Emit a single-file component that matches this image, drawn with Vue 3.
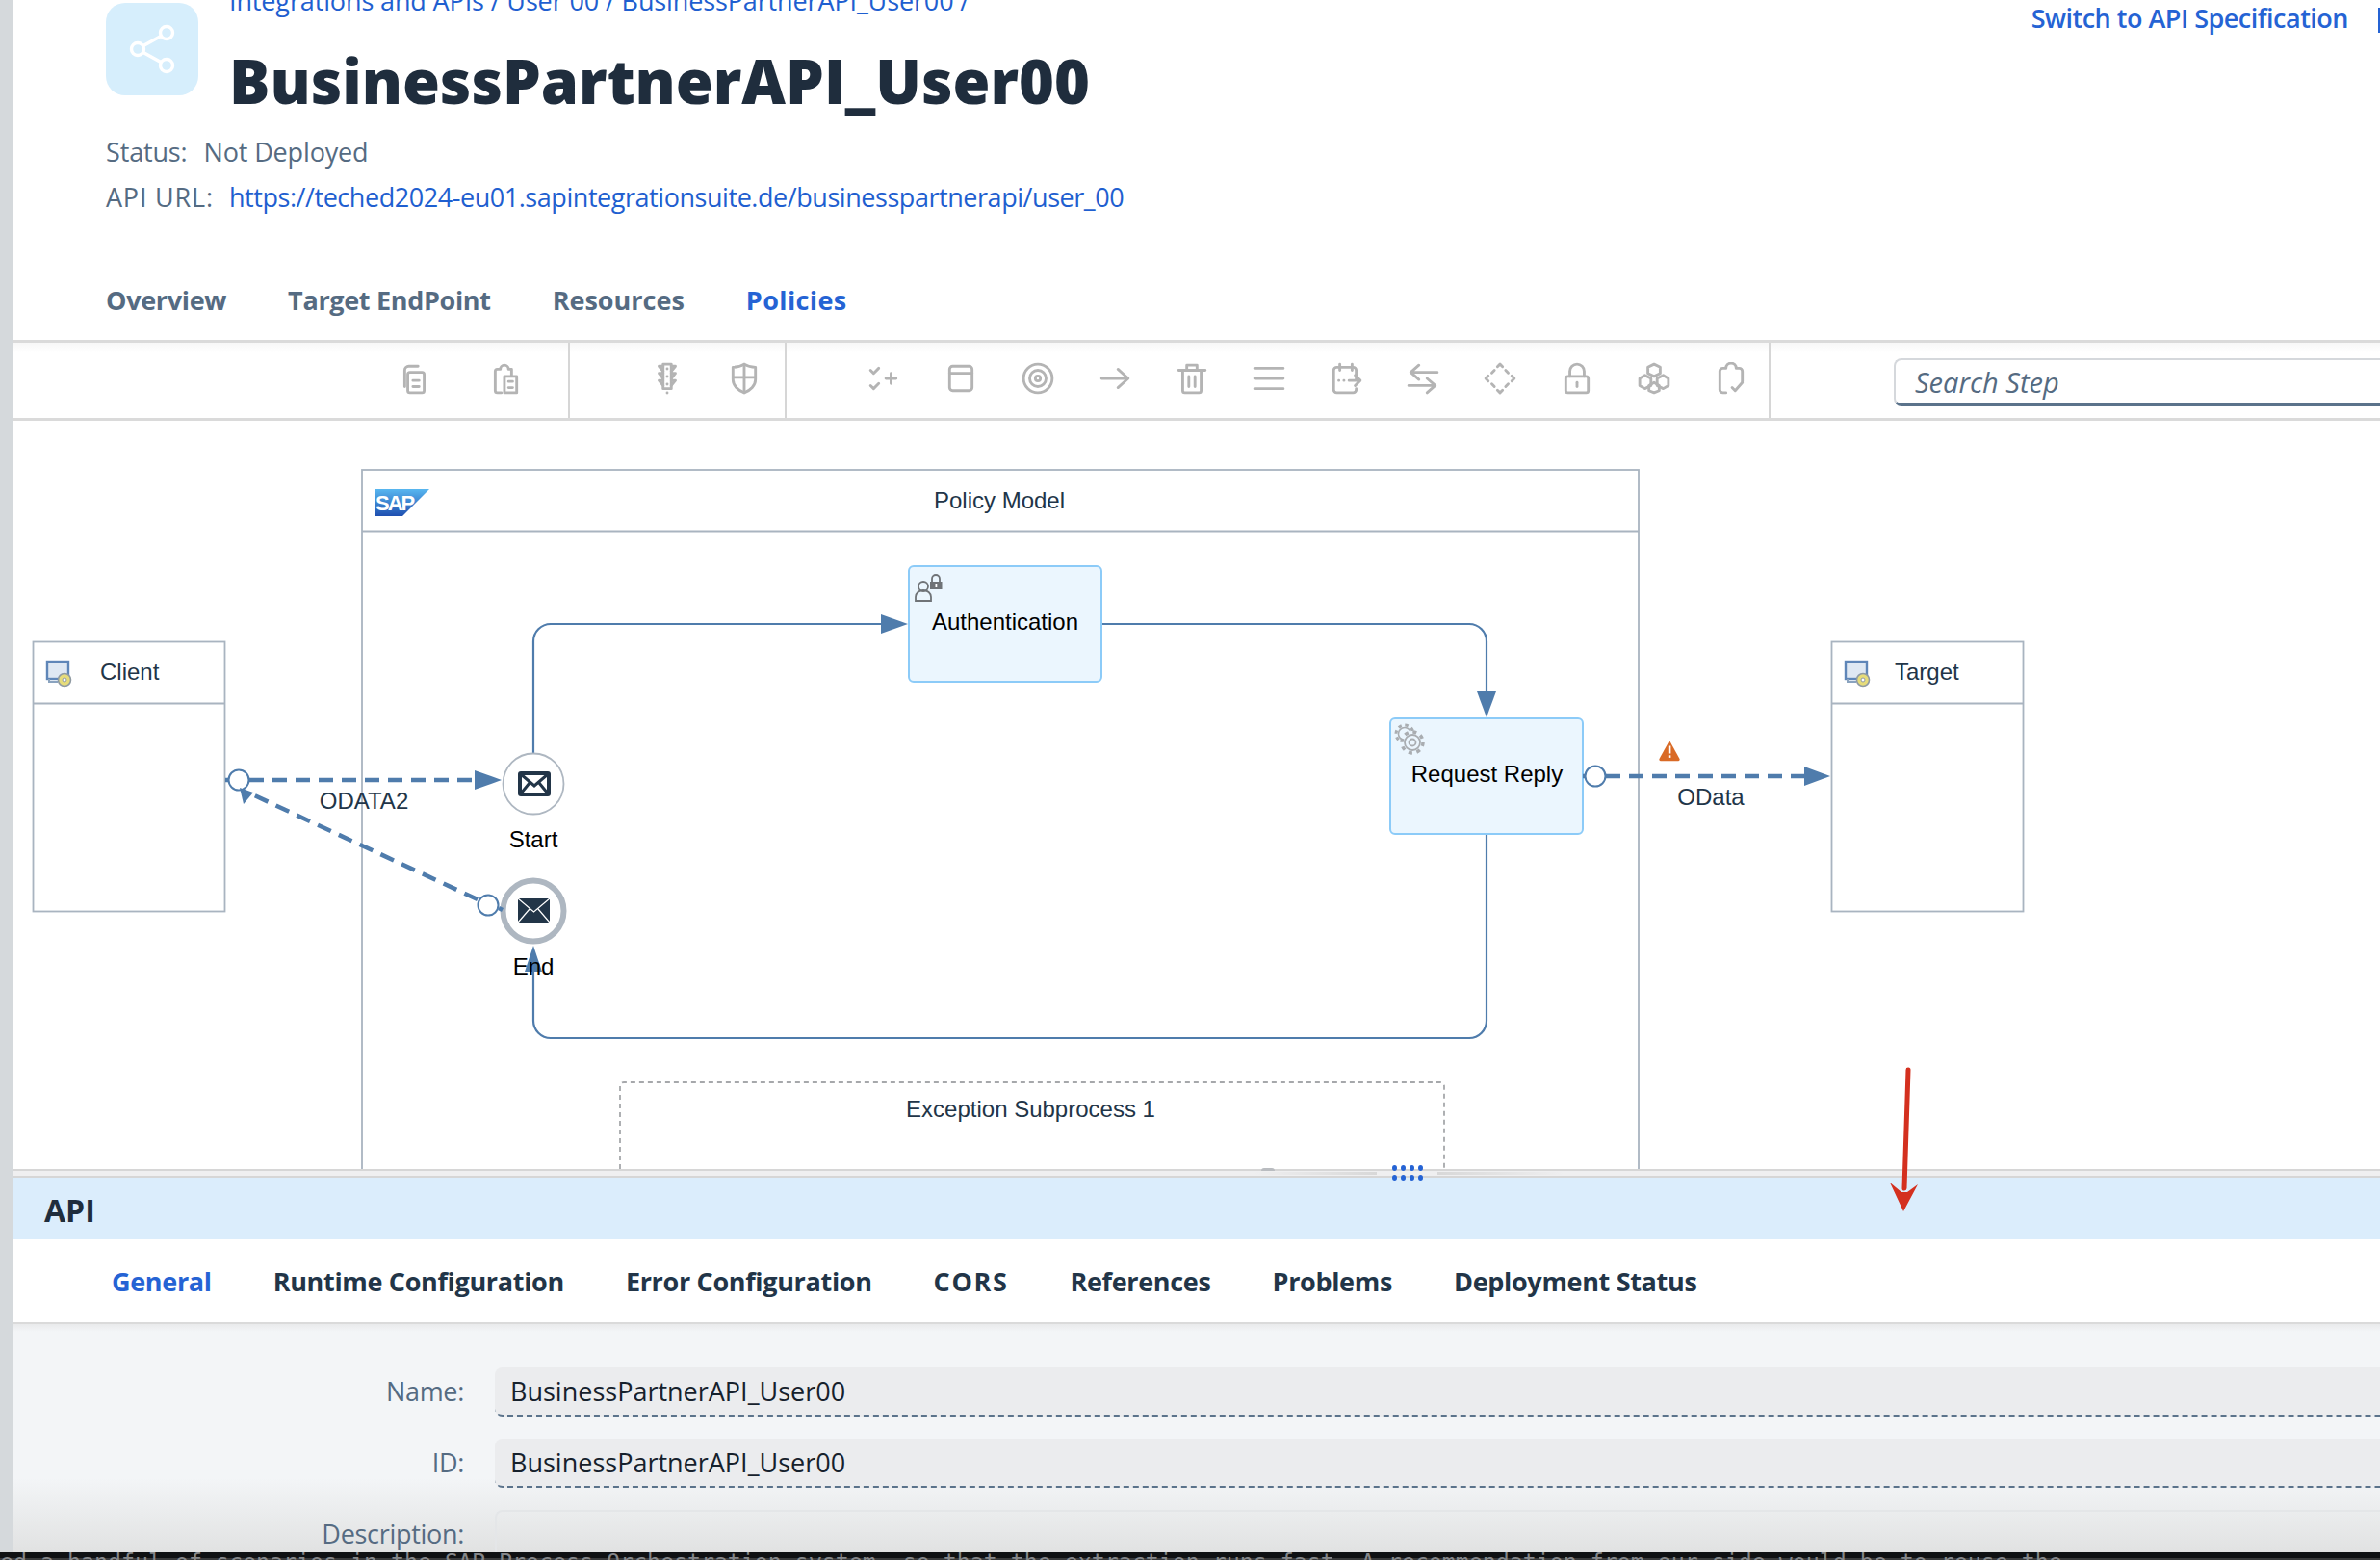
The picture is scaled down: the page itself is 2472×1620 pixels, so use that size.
<template>
  <div class="page">
    <div class="edge"></div>
    <main class="main">
      <header class="head">
        <div class="head-top">
          <div class="logo">
            <svg width="56" height="56" viewBox="0 0 56 56" fill="none" stroke="#fff" stroke-width="3.4">
              <circle cx="43" cy="11" r="6.5" />
              <circle cx="13" cy="28" r="6.5" />
              <circle cx="43" cy="45" r="6.5" />
              <path d="M18.5 24.8 37.5 14.2M18.5 31.2 37.5 41.8" />
            </svg>
          </div>
          <div class="title-col">
            <div class="crumbs">Integrations and APIs / User 00 / BusinessPartnerAPI_User00 /</div>
            <h1 class="title">BusinessPartnerAPI_User00</h1>
          </div>
          <a class="switch">Switch to API Specification</a>
          <span class="switch-btn"></span>
        </div>
        <div class="meta status">
          <span class="meta-label">Status:</span>
          <span>Not Deployed</span>
        </div>
        <div class="meta">
          <span class="meta-label url-label">API URL:</span>
          <a class="url">https://teched2024-eu01.sapintegrationsuite.de/businesspartnerapi/user_00</a>
        </div>
        <nav class="tabs top-tabs">
          <span v-for="t in topTabs" :key="t" class="tab" :class="{ active: t === 'Policies' }">{{ t }}</span>
        </nav>
      </header>

      <div class="toolbar">
        <div v-for="(group, i) in toolGroups" :key="i" class="tool-group" :class="'group-' + i">
          <svg
            v-for="(icon, j) in group"
            :key="j"
            class="tool"
            viewBox="0 0 32 32"
            fill="none"
            stroke="#b4b4b4"
            stroke-width="2.7"
            stroke-linecap="round"
            stroke-linejoin="round"
          >
            <path v-for="d in icon" :key="d" :d="d" />
          </svg>
        </div>
        <div class="search-wrap">
          <div class="search">Search Step</div>
        </div>
      </div>

      <div class="canvas">
        <svg class="diagram" width="2458" height="777" viewBox="14 437 2458 777">
          <defs>
            <linearGradient id="sapg" x1="0" y1="0" x2="0" y2="1">
              <stop offset="0" stop-color="#58b7f0" />
              <stop offset="1" stop-color="#1f4fb0" />
            </linearGradient>
            <g id="sys">
              <rect x="1" y="1" width="22" height="18" fill="#dfe8f3" stroke="#5f86b8" stroke-width="2.4" />
              <path d="M3 19v3h9" fill="none" stroke="#8aa3bf" stroke-width="2" />
              <circle cx="19" cy="20" r="6.5" fill="#e6dc7a" stroke="#8f9aa3" stroke-width="1.6" />
              <circle cx="19" cy="20" r="2" fill="#fff" stroke="#8f9aa3" />
            </g>
          </defs>

          <!-- policy model pool -->
          <rect x="376" y="488" width="1326" height="800" class="pool" />
          <path d="M376 551.500H1702" class="pool" />
          <polygon points="389,508 446,508 418,536 389,536" fill="url(#sapg)" />
          <text x="390" y="530" class="sap">SAP</text>
          <text x="1038" y="528" class="lbl" text-anchor="middle">Policy Model</text>

          <!-- client -->
          <rect x="34.500" y="666.500" width="199" height="280" class="pool" />
          <path d="M34 730.500H234" class="pool" />
          <use href="#sys" x="48" y="686" />
          <text x="104" y="706" class="lbl">Client</text>

          <!-- target -->
          <rect x="1902.500" y="666.500" width="199" height="280" class="pool" />
          <path d="M1902 730.500H2102" class="pool" />
          <use href="#sys" x="1916" y="686" />
          <text x="1968" y="706" class="lbl">Target</text>

          <!-- sequence flows -->
          <path d="M554 782V666a18 18 0 0 1 18-18H918" class="flow" />
          <polygon points="915,638 943,648 915,658" class="tip" />
          <path d="M1145 648H1526a18 18 0 0 1 18 18V720" class="flow" />
          <polygon points="1534,718 1544,745 1554,718" class="tip" />
          <path d="M1544 866V1060a18 18 0 0 1-18 18H572a18 18 0 0 1-18-18V1005" class="flow" />

          <!-- activities -->
          <rect x="944" y="588" width="200" height="120" rx="5" class="task" />
          <text x="1044" y="654" class="lbl black" text-anchor="middle">Authentication</text>
          <g fill="none" stroke="#6f7377" stroke-width="1.8">
            <circle cx="959" cy="609" r="5" />
            <path d="M951 624v-4a8 7 0 0 1 16 0v4z" />
            <path d="M968 604v-3a4 4 0 0 1 8 0v3" />
          </g>
          <rect x="966" y="604" width="12.500" height="8" fill="#6f7377" />
          <rect x="971.500" y="606" width="1.800" height="4" fill="#fff" />

          <rect x="1444" y="746" width="200" height="120" rx="5" class="task" />
          <text x="1544.500" y="812" class="lbl black" text-anchor="middle">Request Reply</text>
          <g fill="none" stroke="#a9adb1">
            <circle cx="1459" cy="762" r="6.500" stroke-width="1.600" />
            <circle cx="1459" cy="762" r="9" stroke-width="3" stroke-dasharray="3.500 3.570" />
            <circle cx="1467" cy="771" r="12" fill="#ebf6fe" stroke="none" />
            <circle cx="1467" cy="771" r="3.500" stroke-width="1.800" />
            <circle cx="1467" cy="771" r="8" stroke-width="1.800" />
            <circle cx="1467" cy="771" r="11" stroke-width="3.500" stroke-dasharray="4 4.640" />
          </g>

          <!-- events -->
          <circle cx="554" cy="814" r="31.500" fill="#fff" stroke="#aeb7c1" stroke-width="1.800" />
          <rect x="538" y="801" width="34" height="26" rx="3" fill="#223548" />
          <rect x="542" y="805" width="26" height="18" fill="#fff" />
          <path d="M541 804l14 12 14-12M541 824l9-11M569 824l-9-11" fill="none" stroke="#223548" stroke-width="3" />
          <text x="554" y="880" class="lbl black" text-anchor="middle">Start</text>

          <circle cx="554" cy="946" r="31.500" fill="#fff" stroke="#aeb7c1" stroke-width="6" />
          <rect x="538" y="933" width="33" height="25" fill="#223548" />
          <path d="M538 933l16.500 14 16.500-14M538 958l12-14M571 958l-12-14" fill="none" stroke="#fff" stroke-width="1.200" />
          <polygon points="554,982 545,1009 563,1009" class="tip" />
          <text x="554" y="1012" class="lbl black" text-anchor="middle">End</text>

          <!-- message flows -->
          <path d="M234 810h4" class="msg solid" />
          <path d="M259 810H494" class="msg" />
          <polygon points="493,800 521,810 493,820" class="tip" />
          <ellipse cx="248" cy="810" rx="10.500" ry="10.500" class="port" />
          <path d="M496 934 262 825" class="msg" />
          <polygon points="249,818 263,823 253,835" class="tip" />
          <ellipse cx="507" cy="940" rx="10.500" ry="10.500" class="port" />
          <path d="M518 943l4 2" class="msg solid" />
          <text x="378" y="840" class="lbl" text-anchor="middle">ODATA2</text>

          <path d="M1644 806h4" class="msg solid" />
          <path d="M1668 806H1876" class="msg" />
          <polygon points="1874,796 1901,806 1874,816" class="tip" />
          <ellipse cx="1657" cy="806" rx="10.500" ry="10.500" class="port" />
          <text x="1777" y="836" class="lbl" text-anchor="middle">OData</text>
          <path d="M1734 769l10.500 19a1.500 1.500 0 0 1-1.300 2.200h-18.400a1.500 1.500 0 0 1-1.300-2.200z" fill="#d96a26" />
          <rect x="1732.800" y="774.500" width="2.600" height="8" fill="#fff" />
          <rect x="1732.800" y="784.300" width="2.600" height="2.600" fill="#fff" />

          <!-- exception subprocess -->
          <path d="M644 1214V1128a4 4 0 0 1 4-4H1496a4 4 0 0 1 4 4V1214" class="sub" />
          <text x="1070.500" y="1160" class="lbl" text-anchor="middle">Exception Subprocess 1</text>
        </svg>
      </div>

      <div class="sash">
        <span class="bump"></span>
        <span class="sash-line left"></span>
        <span class="grip"><i v-for="n in 8" :key="n"></i></span>
        <span class="sash-line right"></span>
      </div>

      <div class="panel-title">API</div>
      <nav class="tabs panel-tabs">
        <span
          v-for="t in panelTabs"
          :key="t"
          class="tab"
          :class="{ active: t === 'General', caps: t === 'CORS' }"
        >{{ t }}</span>
      </nav>

      <section class="form">
        <div class="row">
          <label>Name:</label>
          <div class="field">BusinessPartnerAPI_User00</div>
        </div>
        <div class="row">
          <label>ID:</label>
          <div class="field">BusinessPartnerAPI_User00</div>
        </div>
        <div class="row">
          <label>Description:</label>
          <div class="field area"></div>
        </div>
      </section>

      <div class="terminal"></div>
    </main>
    <div class="term-text">ed a handful of scenarios in the SAP Process Orchestration system, so that the extraction runs fast. A recommendation from our side would be to reuse the</div>
    <!-- annotation drawn on top of the screenshot -->
    <svg class="red-arrow" width="34" height="156" viewBox="0 0 34 156">
      <path d="M21 3 17 126" stroke="#d4301f" stroke-width="5" stroke-linecap="round" />
      <path d="M2 120 16 150 31 122 20 130 14 130z" fill="#d4301f" />
    </svg>
  </div>
</template>

<script setup>
const topTabs = ["Overview", "Target EndPoint", "Resources", "Policies"];
const panelTabs = [
  "General",
  "Runtime Configuration",
  "Error Configuration",
  "CORS",
  "References",
  "Problems",
  "Deployment Status",
];

const toolGroups = [
  [
    ["M6 24V8a4 4 0 0 1 4-4h9", "M11 10h12a2 2 0 0 1 2 2v16a2 2 0 0 1-2 2H11a2 2 0 0 1-2-2V12a2 2 0 0 1 2-2z", "M14 18h6M14 24h6"],
    ["M12 30H8a2 2 0 0 1-2-2V9a2 2 0 0 1 2-2h3a4 4 0 0 1 8 0h3v6", "M15 14h12v16H15z", "M19 19h4M19 25h4"],
  ],
  [
    ["M12 2h8v24h-8z", "M16 6.500v.1M16 14v.1M16 21.500v.1", "M12 4H8l4 5M20 4h4l-4 5M12 11H8l4 5M20 11h4l-4 5M12 18H8l4 5M20 18h4l-4 5", "M16 30v.1"],
    ["M16 2c4 2.500 7 3 11 3v12c0 6-5 11-11 13-6-2-11-7-11-13V5c4 0 7-.5 11-3z", "M16 2v28M5 15h22"],
  ],
  [
    ["M3 8l3 3 5-5M3 23l3 3 5-5", "M18 16h10M23 11v10"],
    ["M8 4h16a3 3 0 0 1 3 3v18a3 3 0 0 1-3 3H8a3 3 0 0 1-3-3V7a3 3 0 0 1 3-3z", "M5 11h22"],
    ["M16 2a14 14 0 1 1 0 28 14 14 0 0 1 0-28z", "M16 8a8 8 0 1 1 0 16 8 8 0 0 1 0-16z", "M16 13.500a2.500 2.500 0 1 1 0 5 2.500 2.500 0 0 1 0-5z"],
    ["M3 16h26M19 7l10 9-10 9"],
    ["M3 8h26M11 8V3h10v5", "M7 8v20a2 2 0 0 0 2 2h14a2 2 0 0 0 2-2V8", "M13 14v10M19 14v10"],
    ["M2 6h28M2 16h28M2 26h28"],
    ["M10 2v6M22 2v6", "M26 17V8a3 3 0 0 0-3-3H7a3 3 0 0 0-3 3v19a3 3 0 0 0 3 3h16a3 3 0 0 0 3-3v-1", "M9 18h.1M14 18h.1M19 18h10M25 13l5 5-5 5"],
    ["M30 10H6M12 3l-8 7 8 7", "M2 23h24M20 16l8 7-8 7"],
    ["M13.500 4.500 16 2l2.500 2.500M27.500 13.500 30 16l-2.500 2.500M18.500 27.500 16 30l-2.500-2.500M4.500 18.500 2 16l2.500-2.500", "M21.500 8l2.500 2.500M8 10.500 10.500 8M24 21.500 21.500 24M10.500 24 8 21.500"],
    ["M9 14V9a7 7 0 0 1 14 0v5", "M7 14h18a2 2 0 0 1 2 2v12a2 2 0 0 1-2 2H7a2 2 0 0 1-2-2V16a2 2 0 0 1 2-2z", "M16 20v4"],
    ["M16 2l6 3v6l-6 3-6-3V5z", "M7 13l6 3v7l-6 3-5-3v-7zM25 13l5 3v7l-5 3-6-3v-7z", "M16 20l5 3v5l-5 2-5-2v-5z"],
    ["M11 30H8a3 3 0 0 1-3-3V9a3 3 0 0 1 3-3h3a5 5 0 0 1 10 0h3a3 3 0 0 1 3 3v10", "M17 25l3 3 7-8"],
  ],
];
</script>

<style scoped>
.page {
  position: relative;
  display: flex;
  width: 2472px;
  height: 1620px;
  overflow: hidden;
  background: #fff;
  font-family: "Open Sans", "Liberation Sans", sans-serif;
  color: #556b82;
}

.edge {
  width: 14px;
  flex: none;
  background: #d5d9dc;
}

.main {
  flex: 1;
  min-width: 0;
  display: flex;
  flex-direction: column;
}

.head {
  height: 353px;
  flex: none;
  padding-left: 96px;
  border-bottom: 3px solid #dadada;
}

.head-top {
  position: relative;
  display: flex;
  gap: 32px;
  height: 131px;
  padding-top: 3px;
}

.logo {
  width: 96px;
  height: 96px;
  flex: none;
  display: flex;
  align-items: center;
  justify-content: center;
  border-radius: 20px;
  background: #d6eefc;
}

.title-col {
  flex: 1;
  margin-top: -20px;
}

.crumbs {
  font-size: 27px;
  line-height: 36px;
  letter-spacing: -0.13px;
  color: #1f5fd0;
}

.title {
  margin: 23px 0 0;
  font-size: 63px;
  line-height: 84px;
  font-weight: 800;
  color: #1f2d3d;
}

.switch {
  position: absolute;
  top: 0;
  right: 33px;
  line-height: 38px;
  font-size: 27px;
  font-weight: 600;
  letter-spacing: -0.5px;
  color: #2563d4;
}

.switch-btn {
  position: absolute;
  top: 8px;
  right: 0;
  width: 2px;
  height: 26px;
  background: #2563d4;
}

.meta {
  display: flex;
  gap: 14px;
  height: 47px;
  align-items: center;
  font-size: 27px;
  letter-spacing: -0.15px;
}

.meta.status {
  gap: 17px;
}

.url-label {
  width: 114px;
  letter-spacing: 0.8px;
  white-space: nowrap;
}

.url {
  letter-spacing: -0.45px;
  color: #1f5fd0;
}

.tabs {
  display: flex;
  gap: 64px;
  font-size: 27px;
  font-weight: 700;
  letter-spacing: -0.33px;
}

.top-tabs {
  margin-top: 64px;
  line-height: 40px;
}

.top-tabs .tab:nth-child(3) {
  letter-spacing: 0;
}

.top-tabs .tab.active {
  letter-spacing: 0.4px;
}

.tab.active {
  color: #2563d4;
}

.tab.caps {
  letter-spacing: 1.6px;
}

.toolbar {
  height: 78px;
  flex: none;
  display: flex;
  background: linear-gradient(#f7f7f7, #fff 10px);
  border-bottom: 3px solid #dadada;
}

.tool-group {
  display: flex;
  align-items: center;
  gap: 46px;
  border-right: 2px solid #d6d6d6;
  padding-bottom: 4px;
}

.group-0 {
  width: 578px;
  box-sizing: border-box;
  justify-content: flex-end;
  padding-right: 48px;
  gap: 60px;
}

.group-1 {
  width: 225px;
  box-sizing: border-box;
  justify-content: flex-end;
  padding-right: 25px;
}

.group-2 {
  width: 1022px;
  box-sizing: border-box;
  padding-left: 84px;
}

.tool {
  width: 34px;
  height: 34px;
  flex: none;
}

.search-wrap {
  flex: 1;
  padding: 16px 0 0 128px;
}

.search {
  height: 50px;
  box-sizing: border-box;
  padding-left: 20px;
  line-height: 46px;
  font-size: 29px;
  font-style: italic;
  border: 2px solid #d5d8dc;
  border-bottom: 3px solid #5b738b;
  border-right: 0;
  border-radius: 8px 0 0 8px;
}

.canvas {
  height: 777px;
  flex: none;
  overflow: hidden;
}

.diagram {
  display: block;
  font-family: "Liberation Sans", Arial, sans-serif;
}

.pool {
  fill: none;
  stroke: #a9b4c0;
  stroke-width: 1.8;
}

.lbl {
  font-size: 24px;
  fill: #223548;
}

.black {
  fill: #000;
}

.sap {
  font-size: 22px;
  font-weight: 700;
  fill: #fff;
  letter-spacing: -2px;
}

.flow {
  fill: none;
  stroke: #4f7cac;
  stroke-width: 2.2;
}

.tip {
  fill: #4f7cac;
}

.task {
  fill: #ebf6fe;
  stroke: #8ccbf8;
  stroke-width: 2;
}

.msg {
  fill: none;
  stroke: #4f7cac;
  stroke-width: 4.5;
  stroke-dasharray: 15 9;
}

.msg.solid {
  stroke-dasharray: none;
}

.port {
  fill: #fff;
  stroke: #4f7cac;
  stroke-width: 2;
}

.sub {
  fill: none;
  stroke: #a6a8ab;
  stroke-width: 1.8;
  stroke-dasharray: 5 4;
}

.red-arrow {
  position: absolute;
  left: 1961px;
  top: 1108px;
}

.sash {
  position: relative;
  height: 9px;
  flex: none;
  box-sizing: border-box;
  background: #efeff0;
  border-top: 2px solid #d6d6d6;
  border-bottom: 2px solid #d6d6d6;
}

.sash-line {
  position: absolute;
  top: 1px;
  height: 3px;
}

.sash-line.left {
  left: 1289px;
  width: 127px;
  background: linear-gradient(90deg, transparent, #d8d8d8);
}

.sash-line.right {
  left: 1479px;
  width: 132px;
  background: linear-gradient(90deg, #d8d8d8, transparent);
}

.bump {
  position: absolute;
  left: 1296px;
  top: -3px;
  width: 14px;
  height: 3px;
  border-radius: 7px 7px 0 0;
  background: #b9bcc0;
}

.grip {
  position: absolute;
  left: 1432px;
  top: -6px;
  display: grid;
  grid-template-columns: repeat(4, 5px);
  grid-auto-rows: 6px;
  gap: 4px;
}

.grip i {
  border-radius: 50%;
  background: #2563d4;
}

.panel-title {
  height: 64px;
  flex: none;
  padding-left: 32px;
  line-height: 68px;
  font-size: 32px;
  font-weight: 700;
  color: #1f2d3d;
  background: #dbedfc;
}

.panel-tabs {
  height: 88px;
  flex: none;
  box-sizing: border-box;
  align-items: center;
  padding-left: 102px;
  color: #223548;
  background: #fff;
  border-bottom: 2px solid #dadada;
}

.form {
  flex: 1;
  min-height: 0;
  overflow: hidden;
  padding-top: 45px;
  background: linear-gradient(#e9eaeb, #f3f5f7 8px, #f3f5f7 160px, #e1e2e2);
}

.row {
  display: flex;
  gap: 32px;
  margin-bottom: 23px;
}

.row label {
  width: 468px;
  flex: none;
  text-align: right;
  font-size: 27px;
  line-height: 49px;
  letter-spacing: -0.3px;
}

.field {
  flex: 1;
  height: 51px;
  box-sizing: border-box;
  padding-left: 16px;
  line-height: 50px;
  font-size: 27px;
  color: #16212c;
  background: #ebecee;
  border-bottom: 2px dashed #5b738b;
  border-radius: 8px 0 0 8px;
}

.field.area {
  height: 80px;
  background: transparent;
  border: 2px solid #e4e6e8;
  border-right: 0;
  border-bottom: 0;
}

.terminal {
  height: 8px;
  flex: none;
  margin-left: -14px;
  background: linear-gradient(#0f1113 6px, #38393a 6px);
}

.term-text {
  position: absolute;
  left: 0;
  top: 1612px;
  height: 8px;
  overflow: hidden;
  font-family: "DejaVu Sans Mono", monospace;
  font-size: 23.25px;
  line-height: 20px;
  white-space: nowrap;
  color: #85878a;
}
</style>

<style>
html,
body {
  margin: 0;
  overflow: hidden;
}
</style>
